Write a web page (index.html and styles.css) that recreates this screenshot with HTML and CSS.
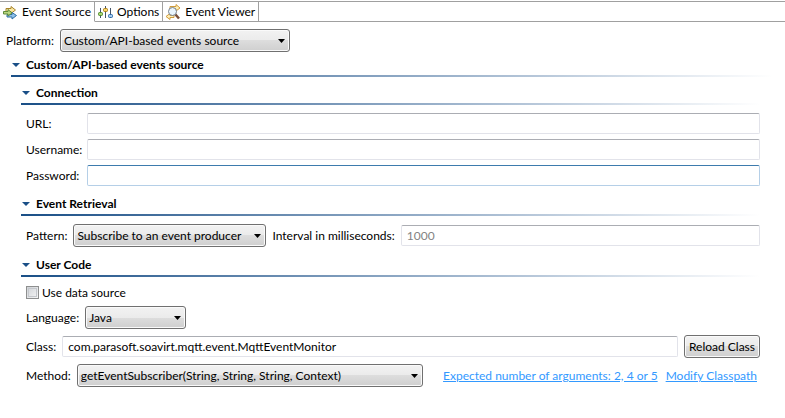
FILE: index.html
```html
<!DOCTYPE html>
<html lang="en">

<head>
    <meta charset="UTF-8">
    <meta name="viewport" content="width=device-width, initial-scale=1.0">
    <title>Event Monitor</title>
    <link rel="stylesheet" href="styles.css">
</head>

<body>
    <nav class="tabs">
        <a class="tab active" href="#source">
            <svg class="icon" viewBox="0 0 16 16">
                <path d="M4 4.5h5v-2L13.5 6 9 9.5v-2H4z" fill="#fbe7a0" stroke="#a8842c" />
                <path d="M5 10.5h5v-2l4.500 3-4.500 3.500v-2H5z" fill="#8fc0e8" stroke="#2f6ea5" />
                <path d="M1.500 7.500H6v-2L10 9l-4 3v-2H1.500z" fill="#b9d77f" stroke="#5f8a3a" />
            </svg>
            Event Source
        </a>
        <a class="tab" href="#options">
            <svg class="icon" viewBox="0 0 16 16">
                <path d="M3.5 4v10M8.5 2v12M13.5 4v10" stroke="#44546a" />
                <rect x="1.5" y="8.5" width="4" height="3" rx="1" fill="#a8d46f" stroke="#4d8a2d" />
                <rect x="6.5" y="4.5" width="4" height="3" rx="1" fill="#f8d568" stroke="#ad7d16" />
                <rect x="11.5" y="10.5" width="4" height="3" rx="1" fill="#a5cdf2" stroke="#2d68a6" />
            </svg>
            Options
        </a>
        <a class="tab" href="#viewer">
            <svg class="icon" viewBox="0 0 16 16">
                <path d="M5 2.5h6v-2L15 4l-4 3V5H5z" fill="#fff0b8" stroke="#d09b3c" />
                <path d="M9 11.5H5v-2l-4 3 4 3v-2h4z" fill="#fff0b8" stroke="#d09b3c" />
                <path d="M10 10l4 4.500" stroke="#7a4f38" stroke-width="2.500" />
                <circle cx="7.500" cy="7.500" r="4" fill="#eaf5fd" stroke="#77818c" />
            </svg>
            Event Viewer
        </a>
    </nav>

    <form class="editor">
        <div class="row">
            <label for="platform">Platform:</label>
            <select id="platform" class="wide">
                <option>Custom/API-based events source</option>
            </select>
        </div>

        <details class="section" open>
            <summary>Custom/API-based events source</summary>

            <details class="section sub" open>
                <summary>Connection</summary>
                <div class="fields">
                    <label for="url">URL:</label>
                    <input type="text" id="url">
                    <label for="username">Username:</label>
                    <input type="text" id="username">
                    <label for="password">Password:</label>
                    <input type="password" id="password">
                </div>
            </details>

            <details class="section sub" open>
                <summary>Event Retrieval</summary>
                <div class="row retrieval">
                    <label for="pattern">Pattern:</label>
                    <select id="pattern" class="medium">
                        <option>Subscribe to an event producer</option>
                    </select>
                    <label for="interval">Interval in milliseconds:</label>
                    <input type="text" id="interval" value="1000" disabled>
                </div>
            </details>

            <details class="section sub" open>
                <summary>User Code</summary>
                <div class="code">
                    <div class="check">
                        <input type="checkbox" id="datasource">
                        <label for="datasource">Use data source</label>
                    </div>
                    <div class="row">
                        <label for="language">Language:</label>
                        <select id="language" class="narrow">
                            <option>Java</option>
                        </select>
                    </div>
                    <div class="row">
                        <label for="class">Class:</label>
                        <input type="text" id="class" value="com.parasoft.soavirt.mqtt.event.MqttEventMonitor">
                        <button type="button">Reload Class</button>
                    </div>
                    <div class="row">
                        <label for="method">Method:</label>
                        <select id="method" class="full">
                            <option>getEventSubscriber(String, String, String, Context)</option>
                        </select>
                        <span class="links">
                            <a href="#arguments">Expected number of arguments: 2, 4 or 5</a>
                            <a href="#classpath">Modify Classpath</a>
                        </span>
                    </div>
                </div>
            </details>
        </details>
    </form>
</body>

</html>
```

FILE: styles.css
```css
* {
    box-sizing: border-box;
}

body {
    margin: 0;
    background: white;
    color: black;
    font: 12px/16px Lato, "Open Sans", sans-serif;
}

.tabs {
    display: flex;
    height: 21px;
    margin-top: 1px;
    border-top: 1px solid #a0a0a0;
}

.tabs::after {
    content: "";
    flex: 1;
    border-bottom: 1px solid #a0a0a0;
}

.tab {
    display: flex;
    align-items: center;
    gap: 4px;
    padding: 0 3px 0 2px;
    border-right: 1px solid #a0a0a0;
    border-bottom: 1px solid #a0a0a0;
    color: black;
    text-decoration: none;
    white-space: nowrap;
}

.tab.active {
    border-bottom-color: transparent;
}

.icon {
    width: 16px;
    height: 16px;
}

.editor {
    padding: 7px 12px 0 6px;
}

.row {
    display: flex;
    align-items: center;
    gap: 6px;
    min-height: 23px;
}

label {
    white-space: nowrap;
}

.section {
    margin: 5px 0 0 5px;
}

.sub {
    margin: 8px 13px 0 10px;
}

summary {
    display: flex;
    align-items: center;
    gap: 6px;
    height: 20px;
    padding: 0 0 4px 1px;
    background: linear-gradient(to right, #1a4f87, #b4c5d8 68%, white) bottom / 100% 2px no-repeat;
    font-weight: bold;
}

summary::before {
    content: "";
    border: 4px solid transparent;
    border-top-color: #1a4f87;
    border-bottom: 0;
}

.fields {
    display: grid;
    grid-template-columns: 56px 1fr;
    gap: 5px;
    align-items: center;
    padding: 8px 0 2px 5px;
}

.retrieval,
.code {
    padding-left: 5px;
    margin: 8px 0 10px;
}

.code {
    display: flex;
    flex-direction: column;
    gap: 6px;
}

.check {
    display: flex;
    align-items: center;
    gap: 3px;
    height: 15px;
}

input[type="text"],
input[type="password"] {
    flex: 1;
    min-width: 0;
    height: 21px;
    padding: 0 5px;
    border: 1px solid #e2e3ea;
    border-top-color: #abadb3;
    border-radius: 2px;
    background: white;
    font: inherit;
}

input[type="text"]:disabled {
    color: #838383;
}

input[type="password"] {
    border-color: #b5cfe7;
    border-top-color: #3d7bad;
}

input[type="checkbox"] {
    appearance: none;
    width: 13px;
    height: 13px;
    margin: 0;
    border: 1px solid #8e8f8f;
    outline: 1px solid #c4c7cc;
    outline-offset: -3px;
    background: linear-gradient(135deg, #cfd2d6, #f6f6f6);
}

select,
button {
    height: 23px;
    border: 1px solid #707070;
    border-radius: 3px;
    box-shadow: inset 0 0 0 1px #fafafa;
    background: linear-gradient(#f2f2f2, #ebebeb 50%, #dddddd 50%, #cfcfcf);
    color: black;
    font: inherit;
}

select {
    appearance: none;
    padding: 0 14px 0 3px;
    background:
        url("data:image/svg+xml,%3Csvg xmlns='http://www.w3.org/2000/svg' width='7' height='4'%3E%3Cpath d='M0 0h7L3.5 4z'/%3E%3C/svg%3E") right 4px center no-repeat,
        linear-gradient(#f2f2f2, #ebebeb 50%, #dddddd 50%, #cfcfcf);
}

button {
    padding: 0 4px;
    white-space: nowrap;
}

.wide {
    width: 230px;
}

.medium {
    width: 193px;
}

.narrow {
    width: 101px;
}

.full {
    width: 346px;
}

.links {
    display: flex;
    gap: 8px;
    margin: 0 3px 0 auto;
    white-space: nowrap;
}

.links a {
    color: #3399ff;
}
```
